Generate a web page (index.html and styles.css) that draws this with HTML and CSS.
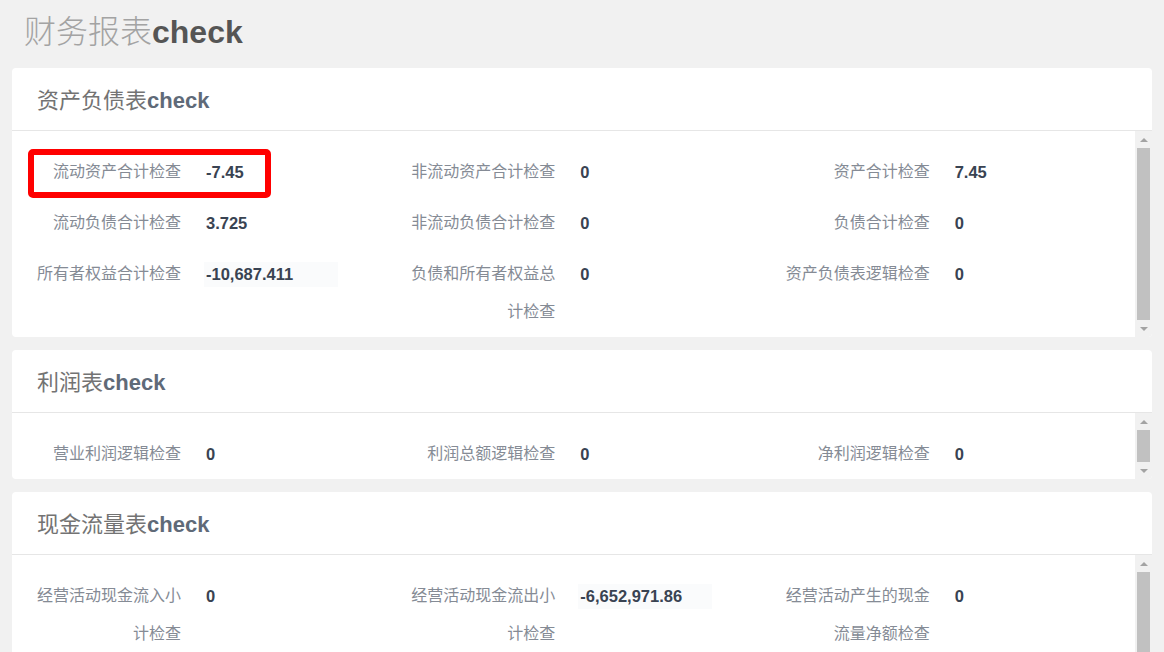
FILE: index.html
```html
<!DOCTYPE html>
<html lang="zh-CN">
<head>
<meta charset="utf-8">
<title>财务报表check</title>
<link rel="stylesheet" href="styles.css">
</head>
<body>

<h1 class="page-title"><span class="thin">财务报表</span><b>check</b></h1>

<div class="card">
  <div class="card-head"><span>资产负债表</span><b>check</b></div>
  <div class="card-body body-balance">
    <div class="pane">
      <div class="grid">
        <div class="item">
          <span class="label">流动资产合计检查</span><span class="value">-7.45</span>
          <div class="mark"></div>
        </div>
        <div class="item"><span class="label">非流动资产合计检查</span><span class="value">0</span></div>
        <div class="item"><span class="label">资产合计检查</span><span class="value">7.45</span></div>
        <div class="item"><span class="label">流动负债合计检查</span><span class="value">3.725</span></div>
        <div class="item"><span class="label">非流动负债合计检查</span><span class="value">0</span></div>
        <div class="item"><span class="label">负债合计检查</span><span class="value">0</span></div>
        <div class="item"><span class="label">所有者权益合计检查</span><span class="value wide">-10,687.411</span></div>
        <div class="item"><span class="label">负债和所有者权益总计检查</span><span class="value">0</span></div>
        <div class="item"><span class="label">资产负债表逻辑检查</span><span class="value">0</span></div>
      </div>
    </div>
    <div class="scrollbar">
      <div class="sb-btn"><svg width="8" height="4" viewBox="0 0 8 4"><path d="M0 4L4 0L8 4Z"/></svg></div>
      <div class="sb-track"><div class="sb-thumb"></div></div>
      <div class="sb-btn"><svg width="8" height="4" viewBox="0 0 8 4"><path d="M0 0L4 4L8 0Z"/></svg></div>
    </div>
  </div>
</div>

<div class="card">
  <div class="card-head"><span>利润表</span><b>check</b></div>
  <div class="card-body body-profit">
    <div class="pane">
      <div class="grid">
        <div class="item"><span class="label">营业利润逻辑检查</span><span class="value">0</span></div>
        <div class="item"><span class="label">利润总额逻辑检查</span><span class="value">0</span></div>
        <div class="item"><span class="label">净利润逻辑检查</span><span class="value">0</span></div>
      </div>
    </div>
    <div class="scrollbar">
      <div class="sb-btn"><svg width="8" height="4" viewBox="0 0 8 4"><path d="M0 4L4 0L8 4Z"/></svg></div>
      <div class="sb-track"><div class="sb-thumb short"></div></div>
      <div class="sb-btn"><svg width="8" height="4" viewBox="0 0 8 4"><path d="M0 0L4 4L8 0Z"/></svg></div>
    </div>
  </div>
</div>

<div class="card">
  <div class="card-head"><span>现金流量表</span><b>check</b></div>
  <div class="card-body body-cash">
    <div class="pane">
      <div class="grid">
        <div class="item"><span class="label">经营活动现金流入小计检查</span><span class="value">0</span></div>
        <div class="item"><span class="label">经营活动现金流出小计检查</span><span class="value wide">-6,652,971.86</span></div>
        <div class="item"><span class="label">经营活动产生的现金流量净额检查</span><span class="value">0</span></div>
      </div>
    </div>
    <div class="scrollbar">
      <div class="sb-btn"><svg width="8" height="4" viewBox="0 0 8 4"><path d="M0 4L4 0L8 4Z"/></svg></div>
      <div class="sb-track"><div class="sb-thumb"></div></div>
      <div class="sb-btn"><svg width="8" height="4" viewBox="0 0 8 4"><path d="M0 0L4 4L8 0Z"/></svg></div>
    </div>
  </div>
</div>

</body>
</html>
```

FILE: styles.css
```css
html, body {
  margin: 0;
  height: 100%;
  overflow: hidden;
}
body {
  background: #f1f1f1;
  padding: 0 12px;
  font-family: "Liberation Sans", "Noto Sans CJK SC", sans-serif;
  color: #333;
}

.page-title {
  margin: 0;
  padding: 12px 12px 16px;
  font-size: 32px;
  line-height: 40px;
  font-weight: normal;
}
.page-title .thin { color: #a3a3a3; font-weight: 300; }
.page-title b { color: #555; }

.card {
  background: #fff;
  border-radius: 4px;
  margin-bottom: 13px;
  overflow: hidden;
}
.card-head {
  height: 58px;
  line-height: 58px;
  padding: 4px 25px 0;
  font-size: 22px;
  border-bottom: 1px solid #e6e6e6;
}
.card-head span { color: #737373; }
.card-head b { color: #5f6a78; }

.card-body {
  display: flex;
}
.body-balance { height: 206px; }
.body-profit { height: 66px; }
.body-cash { height: 205px; }

.pane {
  flex: 1;
  overflow: hidden;
}

/* drawn scrollbar, same look as the browser one */
.scrollbar {
  width: 17px;
  flex: none;
  display: flex;
  flex-direction: column;
  background: #f1f1f1;
}
.sb-btn {
  height: 17px;
  flex: none;
  display: flex;
  align-items: center;
  justify-content: center;
}
.sb-btn svg { fill: #a3a3a3; }
.sb-track {
  flex: 1;
  display: flex;
  flex-direction: column;
  padding: 0 2px;
}
.sb-thumb {
  flex: 1;
  background: #c1c1c1;
}
.sb-thumb.short { flex: none; height: 32px; }

.grid {
  display: grid;
  grid-template-columns: repeat(3, 1fr);
  row-gap: 13px;
  padding: 22px 0 13px;
}
.item {
  position: relative;
  display: flex;
  align-items: flex-start;
  padding-left: 19px;
  line-height: 38px;
  font-size: 16px;
}
.label {
  width: 150px;
  flex: none;
  text-align: right;
  color: #858b95;
}
.value {
  margin-left: 25px;
  color: #394352;
  font-weight: bold;
  font-size: 16.5px;
}
.value.wide {
  background: #fafbfc;
  width: 132px;
  height: 25px;
  line-height: 25px;
  margin: 7px 0 0 23px;
  padding-left: 2px;
}

.mark {
  position: absolute;
  left: 16px;
  top: -4px;
  width: 231px;
  height: 37px;
  border: 6px solid #f00;
  border-radius: 5px;
}
```
